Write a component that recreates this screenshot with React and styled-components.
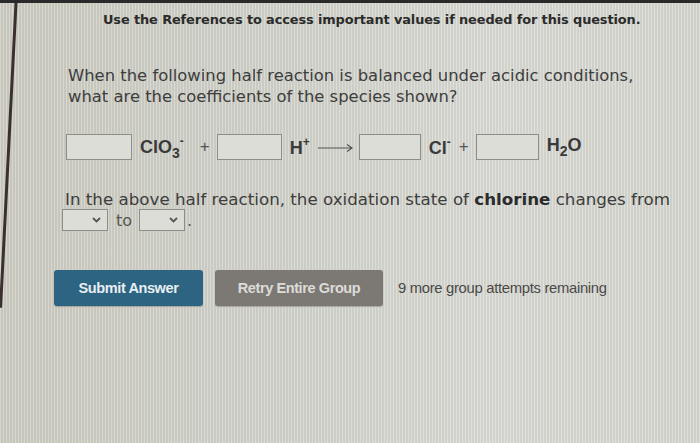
import React from 'react'
import styled, { createGlobalStyle } from 'styled-components'

const Global = createGlobalStyle`
  html, body {
    margin: 0;
    padding: 0;
    width: 700px;
    height: 443px;
    overflow: hidden;
  }
  body {
    font-family: "DejaVu Sans", Verdana, sans-serif;
  }
`

const Screen = styled.div`
  position: relative;
  width: 700px;
  height: 443px;
  box-sizing: border-box;
  border-top: 3px solid #2a2a2a;
  background:
    repeating-linear-gradient(90deg, rgba(255,255,255,0.18) 0 1px, rgba(0,0,0,0.04) 1px 3px),
    linear-gradient(90deg, #cdcdc3 0%, #d3d4cc 45%, #dadbd5 70%, #d6d7cf 100%);
  overflow: hidden;
`

const Bezel = styled.div`
  position: absolute;
  left: 15px;
  top: -10px;
  width: 3px;
  height: 315px;
  background: #3a3030;
  transform: rotate(2.9deg);
  transform-origin: top left;
`

const Header = styled.div`
  padding: 9px 0 0 103px;
  font-size: 12.9px;
  font-weight: bold;
  color: #2b2b2b;
  letter-spacing: -0.1px;
`

const Question = styled.div`
  padding: 0 0 0 68px;
`

const Prompt = styled.p`
  margin: 38px 0 0;
  font-size: 16.4px;
  line-height: 21px;
  color: #3d3d3d;
  width: 580px;
`

const Equation = styled.div`
  display: flex;
  align-items: center;
  margin: 26px 0 0 -2px;
  height: 28px;
  font-family: "Liberation Sans", Arial, sans-serif;
  color: #3a3a3a;
`

const Blank = styled.div`
  width: ${p => p.w || 64}px;
  height: 26px;
  box-sizing: border-box;
  border: 1.5px solid #8e8e88;
  background: #dcddd7;
  margin-right: 8px;
`

const Species = styled.span`
  font-weight: bold;
  font-size: 18px;
  margin-right: ${p => p.mr || 0}px;
  color: #3a3a3a;
  sub { font-size: 14px; vertical-align: -5px; }
  sup { font-size: 12px; vertical-align: 8px; }
`

const Plus = styled.span`
  font-size: 17px;
  margin-right: ${p => p.mr || 8}px;
  color: #555;
`

const Arrow = styled.svg`
  width: 36px;
  height: 10px;
  margin: 2px 5px 0 8px;
`

const Statement = styled.div`
  margin: 28px 0 0 -3px;
  font-size: 16.7px;
  line-height: 20px;
  color: #3d3d3d;
  b { color: #2b2b2b; }
`

const SelectRow = styled.div`
  display: flex;
  align-items: center;
  margin: 0 0 0 -6px;
  font-size: 16px;
  color: #555;
`

const Select = styled.div`
  width: 46px;
  height: 22px;
  box-sizing: border-box;
  border: 1.5px solid #8e8e88;
  background: #dcddd7;
  display: flex;
  align-items: center;
  justify-content: flex-end;
  padding-right: 6px;
  margin-right: ${p => p.mr ?? 8}px;
`

const Joiner = styled.span`
  margin-right: 7px;
`

const Actions = styled.div`
  display: flex;
  align-items: center;
  margin: 39px 0 0 -14px;
  font-family: "Liberation Sans", Arial, sans-serif;
`

const Button = styled.div`
  width: ${p => p.w}px;
  height: 36px;
  border-radius: 3px;
  background: ${p => p.bg};
  color: ${p => p.fg};
  font-weight: bold;
  font-size: 14.5px;
  letter-spacing: -0.4px;
  display: flex;
  align-items: center;
  justify-content: center;
  margin-right: 12px;
  box-shadow: 0 1px 1px rgba(0,0,0,0.2);
`

const Remaining = styled.span`
  font-size: 14.8px;
  color: #4a4a48;
  letter-spacing: -0.3px;
  margin-left: 3px;
`

function Chevron() {
  return (
    <svg width="9" height="6" viewBox="0 0 9 6">
      <path d="M1 1 L4.5 4.5 L8 1" fill="none" stroke="#555" strokeWidth="1.8" />
    </svg>
  )
}

export default function App() {
  return (
    <>
      <Global />
      <Screen>
        <Bezel />
        <Header>Use the References to access important values if needed for this question.</Header>
        <Question>
          <Prompt>
            When the following half reaction is balanced under acidic conditions, what are the coefficients of the species shown?
          </Prompt>
          <Equation>
            <Blank w={66} />
            <Species mr={16}>ClO<sub>3</sub><sup>-</sup></Species>
            <Plus mr={7}>+</Plus>
            <Blank w={65} />
            <Species>H<sup>+</sup></Species>
            <Arrow viewBox="0 0 36 10">
              <path d="M0 5 H33 M29 1.5 L34 5 L29 8.5" fill="none" stroke="#555" strokeWidth="1.2" />
            </Arrow>
            <Blank w={62} />
            <Species mr={8}>Cl<sup>-</sup></Species>
            <Plus mr={7}>+</Plus>
            <Blank w={63} />
            <Species>H<sub>2</sub>O</Species>
          </Equation>
          <Statement>
            In the above half reaction, the oxidation state of <b>chlorine</b> changes from
          </Statement>
          <SelectRow>
            <Select><Chevron /></Select>
            <Joiner>to</Joiner>
            <Select mr={2}><Chevron /></Select>
            <span>.</span>
          </SelectRow>
          <Actions>
            <Button w={149} bg="#2c6482" fg="#e8eef2">Submit Answer</Button>
            <Button w={168} bg="#7c7975" fg="#dcdcd8">Retry Entire Group</Button>
            <Remaining>9 more group attempts remaining</Remaining>
          </Actions>
        </Question>
      </Screen>
    </>
  )
}
